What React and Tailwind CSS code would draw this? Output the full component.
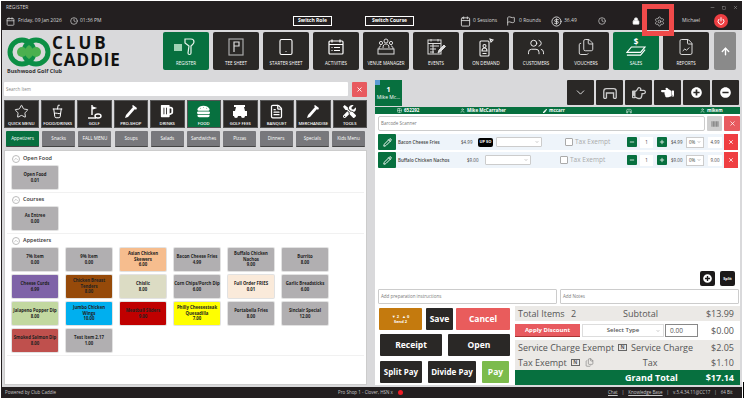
import {
  Calendar, Clock, Lock, Settings, Power, Minus, Square, X, Tablet, Users, FileChartLine,
  ArrowUp, ChevronDown, Plus, Pencil, Star, CupSoda, FileText, User, Barcode,
  ChevronUp, Flag, Grid2x2, CircleDollarSign, Files,
} from 'lucide-react'
import { FaRegHandPointRight, FaHandPointLeft, FaPlusCircle, FaMinusCircle, FaPen, FaBeer, FaHamburger, FaTools } from 'react-icons/fa'

const font = { fontFamily: '"Open Sans", sans-serif' }

function Scanner() {
  return (
    <svg width="24" height="18" viewBox="0 0 24 18" fill="none">
      <rect x="0" y="6" width="8" height="7" fill="#9fd4b5" />
      <path d="M11 1h6c2 0 3 1 3 3s-2 3-3 4l0 7c0 2-3 2-3 0l1-7-4-3z" stroke="#e8f3ec" strokeWidth="1.2" />
    </svg>
  )
}

function TeeSheet() {
  return (
    <svg width="16" height="18" viewBox="0 0 16 18" fill="none">
      <rect x="1" y="1" width="14" height="16" stroke="#aaa" strokeWidth="1.2" />
      <path d="M6 14V4h5v4H6" stroke="#ddd" strokeWidth="1.2" />
    </svg>
  )
}

function ActivitiesIcon() {
  return (
    <svg width="18" height="18" viewBox="0 0 18 18" fill="none" stroke="#fff" strokeWidth="1.2">
      <rect x="2" y="3" width="14" height="13" rx="1" />
      <path d="M2 6.5h14M5 1.5v3M13 1.5v3M7 9.5h6M7 12.5h6M4.5 9.5h1M4.5 12.5h1" />
    </svg>
  )
}

function VenueIcon() {
  return (
    <svg width="20" height="18" viewBox="0 0 20 18" fill="none" stroke="#ddd" strokeWidth="1">
      <circle cx="10" cy="3" r="2" />
      <circle cx="5" cy="5" r="1.6" />
      <circle cx="15" cy="5" r="1.6" />
      <path d="M7 10c0-3 1-4 3-4s3 1 3 4M3 11c0-2 .5-3 2-3M17 11c0-2-.5-3-2-3" />
      <rect x="2" y="11" width="16" height="5" />
    </svg>
  )
}

function EventsIcon() {
  return (
    <svg width="19" height="18" viewBox="0 0 19 18" fill="none" stroke="#ddd" strokeWidth="1">
      <rect x="1" y="2" width="13" height="14" />
      <path d="M1 5.5h13M4 1v2.5M11 1v2.5M3 8h9M3 11h6M3 14h4M6 5.5v10" />
      <path d="M11 15l1-3 5-5 1.5 1.5-5 5z" fill="#ddd" />
    </svg>
  )
}

function DemandIcon() {
  return (
    <svg width="16" height="19" viewBox="0 0 16 19" fill="none" stroke="#eee" strokeWidth="1.1">
      <rect x="2" y="3" width="9" height="15" rx="1" />
      <circle cx="6.5" cy="8" r="1.5" />
      <path d="M4 13c0-2 1-3 2.5-3S9 11 9 13zM4.500 15.500h4M12 1l3 1-2 2z" />
    </svg>
  )
}

function Money() {
  return (
    <div className="flex flex-col items-center">
      <span className="text-[8px] leading-[8px] font-bold text-white">$</span>
      <svg width="20" height="11" viewBox="0 0 22 12" fill="none">
        <path d="M1 7l5-6h15l-5 6zM1 10h15l5-6" stroke="#fff" strokeWidth="1.2" />
      </svg>
    </div>
  )
}

function Cart() {
  return (
    <svg width="16" height="15" viewBox="0 0 16 15" fill="#fff">
      <path d="M2 1h11v2h-1l1 4h2v5h-2a2 2 0 0 1-4 0H6a2 2 0 0 1-4 0H1V7h2l1-4H2z" />
    </svg>
  )
}

function GolfClub() {
  return (
    <svg width="15" height="16" viewBox="0 0 15 16" fill="none" stroke="#fff" strokeWidth="1.4">
      <path d="M5 1v10M5 3l3 1-3 1" />
      <ellipse cx="11" cy="12" rx="3" ry="2" />
      <path d="M1 14h8" />
    </svg>
  )
}

function Tube() {
  return (
    <svg width="14" height="15" viewBox="0 0 14 15" fill="#fff">
      <path d="M9 1l4 3-1 2-1-1-7 8-3 1 1-3 7-8-1-1z" />
    </svg>
  )
}

function Booth({ size = 16, color = '#ccc' }) {
  return (
    <svg width={size} height={size} viewBox="0 0 18 18" fill="none" stroke={color} strokeWidth="1.5">
      <path d="M2 15V7c0-2 1-3 3-3h8c2 0 3 1 3 3v8M5 15V9h8v6M2 15h3M13 15h3" />
    </svg>
  )
}

function Logo() {
  return (
    <svg width="44" height="30" viewBox="0 0 44 30" fill="none">
      <circle cx="15" cy="15" r="12" stroke="#0c8f45" strokeWidth="5" />
      <circle cx="29" cy="15" r="12" stroke="#0c8f45" strokeWidth="5" />
      <path d="M22 8c3 2 4 4 4 7s-1 5-4 7c-3-2-4-4-4-7s1-5 4-7z" fill="#4bb04f" />
      <circle cx="15" cy="15" r="5" fill="#4bb04f" />
      <circle cx="29" cy="15" r="5" fill="#4bb04f" />
    </svg>
  )
}

const navItems = [
  { label: 'REGISTER', icon: <Scanner />, active: true },
  { label: 'TEE SHEET', icon: <TeeSheet /> },
  { label: 'STARTER SHEET', icon: <Tablet size={18} strokeWidth={1.5} color="#fff" /> },
  { label: 'ACTIVITIES', icon: <ActivitiesIcon /> },
  { label: 'VENUE MANAGER', icon: <VenueIcon /> },
  { label: 'EVENTS', icon: <EventsIcon /> },
  { label: 'ON DEMAND', icon: <DemandIcon /> },
  { label: 'CUSTOMERS', icon: <Users size={18} strokeWidth={1.3} color="#eee" /> },
  { label: 'VOUCHERS', icon: <Files size={18} strokeWidth={1.3} color="#ddd" /> },
  { label: 'SALES', icon: <Money />, active: true },
  { label: 'REPORTS', icon: <FileChartLine size={18} strokeWidth={1.3} color="#ddd" /> },
]

const categories = [
  { label: 'QUICK MENU', icon: <Star size={15} strokeWidth={1.4} color="#fff" /> },
  { label: 'FOOD/DRINKS', icon: <CupSoda size={15} strokeWidth={1.6} color="#fff" /> },
  { label: 'GOLF', icon: <GolfClub /> },
  { label: 'PRO-SHOP', icon: <Tube /> },
  { label: 'DRINKS', icon: <FaBeer size={14} color="#fff" /> },
  { label: 'FOOD', icon: <FaHamburger size={13} color="#fff" />, active: true },
  { label: 'GOLF FEES', icon: <Cart /> },
  { label: 'BANQUET', icon: <FileText size={15} strokeWidth={2} color="#fff" /> },
  { label: 'MERCHANDISE', icon: <Tube /> },
  { label: 'TOOLS', icon: <FaTools size={13} color="#fff" /> },
]

const tabs = ['Appetizers', 'Snacks', 'FALL MENU', 'Soups', 'Salads', 'Sandwiches', 'Pizzas', 'Dinners', 'Specials', 'Kids Menu']

const appetizers = [
  { name: '7% Item', price: '0.00' },
  { name: '9% Item', price: '0.00' },
  { name: 'Asian Chicken Skewers', price: '6.00', bg: 'bg-[#f6bd8e]' },
  { name: 'Bacon Cheese Fries', price: '4.99' },
  { name: 'Buffalo Chicken Nachos', price: '9.00' },
  { name: 'Burrito', price: '8.00' },
  { name: 'Cheese Curds', price: '6.99', bg: 'bg-[#7f63a8]' },
  { name: 'Chicken Breast Tenders', price: '8.00', bg: 'bg-[#964a0a]' },
  { name: 'Chislic', price: '8.00', bg: 'bg-[#dcdcc4]' },
  { name: 'Corn Chips/Porch Dip', price: '6.00' },
  { name: 'Full Order FRIES', price: '0.01', bg: 'bg-[#faeada]' },
  { name: 'Garlic Breadsticks', price: '6.00' },
  { name: 'Jalapeno Popper Dip', price: '8.00', bg: 'bg-[#c2d8a0]' },
  { name: 'Jumbo Chicken Wings', price: '10.00', bg: 'bg-[#00afef]' },
  { name: 'Meatball Sliders', price: '9.00', bg: 'bg-[#c00000]' },
  { name: 'Philly Cheesesteak Quesadilla', price: '7.00', bg: 'bg-[#ffff00]' },
  { name: 'Portabella Fries', price: '8.00' },
  { name: 'Sinclair Special', price: '12.00' },
  { name: 'Smoked Salmon Dip', price: '8.00', bg: 'bg-[#bf504d]' },
  { name: 'Test Item 2.17', price: '1.00' },
]

function ItemCard({ name, price, bg = 'bg-[#b1afb1]' }) {
  return (
    <div className={`${bg} w-[46px] h-[23px] rounded-[1px] flex flex-col items-center justify-center text-center text-[4.3px] leading-[5.6px] font-bold text-[#222] shadow-[0_0_0_1px_#e2e2e2]`}>
      <span>{name}</span>
      <span>{price}</span>
    </div>
  )
}

function SectionHead({ title }) {
  return (
    <div className="h-[11px] flex items-center gap-[3px] pl-[5px] text-[5.5px] font-semibold text-[#333]">
      <span className="w-[8px] h-[8px] rounded-full border border-[#bbb] flex items-center justify-center">
        <ChevronUp size={6} color="#999" />
      </span>
      {title}
    </div>
  )
}

function Section({ title, children, pt = 'pt-[1px]' }) {
  return (
    <div className={`${pt} pb-[3px] mx-[2px] border-b border-[#f1f1f1]`}>
      <SectionHead title={title} />
      <div className="mt-[2px] pl-[5px] grid grid-cols-[repeat(6,46px)] gap-x-[8px] gap-y-[4px]">{children}</div>
    </div>
  )
}

function ToolButton({ children }) {
  return <div className="w-[27px] h-[25px] bg-[#2a2826] rounded-[1px] flex items-center justify-center text-white">{children}</div>
}

function Stepper({ children, green }) {
  return (
    <span className={`w-[10px] h-[10px] rounded-[1px] flex items-center justify-center ${green ? 'bg-[#07703f] text-white' : ''}`}>{children}</span>
  )
}

function OrderRow({ name, price, up, selectW, checkMl }) {
  return (
    <div className="h-[16px] flex items-center bg-[#eef4fa] ml-[3px] mr-[2px] text-[4.5px] text-[#444]">
      <span className="w-[18px] h-[16px] bg-[#07703f] rounded-[1px] flex items-center justify-center">
        <Pencil size={9} color="#fff" strokeWidth={2.5} />
      </span>
      <span className="ml-[2px] w-[58px] font-semibold whitespace-nowrap">{name}</span>
      <span className={up ? 'ml-[5px] w-[15px]' : 'ml-[11px] w-[15px]'}>{price}</span>
      {up && <span className="ml-[2px] w-[15px] h-[9px] bg-black text-white font-bold rounded-[2px] flex items-center justify-center whitespace-nowrap text-[4px]">UP SO</span>}
      <span className={`ml-[3px] ${selectW} h-[10px] bg-white border border-[#ccc] rounded-[1px] flex items-center justify-end pr-[2px]`}>
        <ChevronDown size={4} color="#555" />
      </span>
      <span className={`${checkMl} w-[8px] h-[8px] bg-white border border-[#aaa] rounded-[1px]`} />
      <span className="ml-[2px] text-[6.5px] text-[#aaa] whitespace-nowrap">Tax Exempt</span>
      <span className="ml-auto flex items-center">
        <Stepper green><Minus size={6} strokeWidth={3} /></Stepper>
        <span className="ml-[3px] w-[13px] h-[11px] bg-white flex items-center justify-center">1</span>
        <span className="ml-[4px]"><Stepper green><Plus size={6} strokeWidth={3} /></Stepper></span>
        <span className="ml-[4px] w-[15px]">{price}</span>
        <span className="w-[18px] h-[11px] bg-white border border-[#ccc] flex items-center justify-between px-[2px]">0%<ChevronDown size={4} /></span>
        <span className="ml-[4px] w-[14px] h-[11px] bg-white flex items-center justify-center">{price.slice(1)}</span>
        <span className="ml-[2px] w-[14px] h-[16px] bg-[#ef3e42] text-white flex items-center justify-center"><X size={6} strokeWidth={3} /></span>
      </span>
    </div>
  )
}

function NBox() {
  return <span className="w-[9px] h-[7px] shrink-0 border border-[#666] text-[5px] flex items-center justify-center font-bold text-[#555]">N</span>
}

function ActionButton({ w, bg = 'bg-[#2a2826]', text = 'text-[8.5px]', children }) {
  return <div className={`${w} ${bg} ${text} h-[22px] rounded-[1px] flex items-center justify-center font-bold text-white whitespace-nowrap`}>{children}</div>
}

export default function App() {
  return (
    <div className="w-[746px] h-[402px] bg-white pt-px pl-px overflow-hidden relative" style={font}>
      <div className="w-[741px] h-[397px] flex flex-col bg-[#d9d9db]">
        {/* Title bar */}
        <header className="h-[29px] bg-[#231f20] text-[#d8d8d8] text-[5px]">
          <div className="h-[13px] flex items-center pl-[5px] pr-[4px]">
            <span>REGISTER</span>
            <span className="ml-auto flex items-center gap-[7px] text-[#bbb]">
              <Minus size={5} /><Square size={4} /><X size={5} />
            </span>
          </div>
          <div className="h-[14px] flex items-center pl-[5px]">
            <Calendar size={9} />
            <span className="ml-[3px] w-[52px]">Friday, 09 Jan 2026</span>
            <Clock size={8} />
            <span className="ml-[2px] w-[213px]">01:36 PM</span>
            <span className="w-[39px] h-[10px] border border-white text-white font-bold flex items-center justify-center">Switch Role</span>
            <span className="ml-[33px] w-[49px] h-[10px] border border-white text-white font-bold flex items-center justify-center">Switch Course</span>
            <Calendar className="ml-[46px]" size={11} />
            <span className="ml-[2px] w-[33px]">0 Sessions</span>
            <Flag size={10} />
            <span className="ml-[3px] w-[32px]">0 Rounds</span>
            <CircleDollarSign size={11} />
            <span className="ml-[2px] w-[34px]">36.49</span>
            <Clock size={8} />
            <Lock className="ml-[26px]" size={8} fill="#fff" />
            <Settings className="ml-[14px]" size={11} strokeWidth={1.4} />
            <span className="ml-[17px] w-[32px]">Michael</span>
            <span className="w-[14px] h-[14px] rounded-full bg-[#ee3e42] flex items-center justify-center">
              <Power size={8} color="#fff" strokeWidth={3} />
            </span>
          </div>
        </header>

        {/* Logo and main nav */}
        <div className="h-[50px] border-l border-[#231f20] flex pt-[2px] pl-[5px]">
          <div className="w-[156px] shrink-0">
            <div className="flex items-start">
              <div className="mt-[5px]"><Logo /></div>
              <div className="mt-[2px] ml-[1px] text-[17px] leading-[17px] font-bold text-[#111] tracking-[1px]">
                <div className="tracking-[3px]">CLUB</div>
                <div>CADDIE</div>
              </div>
            </div>
            <div className="text-[5.5px] leading-[6px] font-bold text-[#333]">Bushwood Golf Club</div>
          </div>
          <div className="flex gap-[4px]">
            {navItems.map((item) => (
              <div
                key={item.label}
                className={`w-[46px] h-[38px] rounded-[2px] flex flex-col items-center pt-[5px] ${item.active ? 'bg-[#07703f]' : 'bg-[#2a2826]'}`}
              >
                <div className="h-[20px] flex items-center justify-center">{item.icon}</div>
                <span className="text-[4.5px] mt-[3px] text-white whitespace-nowrap">{item.label}</span>
              </div>
            ))}
          </div>
          <div className="ml-[5px] w-[22px] h-[38px] rounded-[2px] bg-[#8a8a8a] flex items-center justify-center">
            <ArrowUp size={11} color="#fff" strokeWidth={3} />
          </div>
        </div>

        {/* Body */}
        <div className="h-[307px] flex border-l border-[#231f20]">
          {/* Left column */}
          <div className="w-[363px] ml-[2px] shrink-0 pt-[2px]">
            <div className="flex gap-[4px]">
              <div className="flex-1 h-[14px] bg-white rounded-[1px] flex items-center pl-[2px] text-[4.5px] text-[#888]">Search Item</div>
              <div className="w-[15px] h-[15px] bg-[#e85a5f] rounded-[1px] flex items-center justify-center">
                <X size={7} color="#fff" strokeWidth={3} />
              </div>
            </div>
            <div className="mt-[3px] flex gap-[2px]">
              {categories.map((cat) => (
                <div
                  key={cat.label}
                  className={`flex-1 h-[28px] flex flex-col items-center pt-[3px] border border-[#555] ${cat.active ? 'bg-[#07703f]' : 'bg-[#2a2826]'}`}
                >
                  <div className="h-[15px] flex items-center">{cat.icon}</div>
                  <span className="text-[4.2px] text-white font-semibold mt-[2px] whitespace-nowrap">{cat.label}</span>
                </div>
              ))}
            </div>
            <div className="mt-[3px] px-[2px] flex justify-between">
              {tabs.map((tab, i) => (
                <div
                  key={tab}
                  className={`w-[33px] h-[16px] rounded-[1px] flex items-center justify-center text-[4.6px] text-white whitespace-nowrap border-b border-[#444] ${i === 0 ? 'bg-[#07703f]' : 'bg-[#78787c]'}`}
                >
                  {tab}
                </div>
              ))}
            </div>
            <div className="mt-[3px] h-[235px] bg-white border border-[#ccc]">
              <Section title="Open Food" pt="pt-[2px]">
                <ItemCard name="Open Food" price="0.01" />
              </Section>
              <Section title="Courses">
                <ItemCard name="As Entree" price="0.00" />
              </Section>
              <Section title="Appetizers">
                {appetizers.map((item) => (
                  <ItemCard key={item.name} {...item} />
                ))}
              </Section>
            </div>
          </div>

          {/* Right column */}
          <div className="w-[365px] ml-[8px] shrink-0 flex flex-col">
            <div className="h-[26px] flex">
              <div className="w-[27px] h-[26px] bg-[#07703f] relative flex flex-col items-center justify-center text-white">
                <span className="absolute top-0 left-0 w-[5px] h-[5px] bg-[#5b9bd5]" />
                <span className="text-[7px] leading-[9px] font-bold">1</span>
                <span className="text-[5px] leading-[7px]">Mike Mc...</span>
              </div>
              <div className="ml-auto flex gap-[2px] pr-px">
                <ToolButton><ChevronDown size={13} strokeWidth={1.5} /></ToolButton>
                <ToolButton><Booth /></ToolButton>
                <ToolButton><FaRegHandPointRight size={14} color="#ccc" /></ToolButton>
                <ToolButton><FaHandPointLeft size={13} /></ToolButton>
                <ToolButton><FaPlusCircle size={11} /></ToolButton>
                <ToolButton><FaMinusCircle size={11} /></ToolButton>
              </div>
            </div>
            <div className="mt-[1px] h-[7px] bg-[#07703f] text-white font-bold text-[4.5px] flex items-center relative">
              <span className="flex items-center gap-[2px] ml-[22px] w-[63px]"><Grid2x2 size={5} />652292</span>
              <span className="flex items-center gap-[2px] w-[83px]"><User size={5} />Mike McCarraher</span>
              <span className="flex items-center gap-[2px] w-[83px]"><FaPen size={4} />mccarr</span>
              <span className="w-[74px]"><Booth size={6} color="#fff" /></span>
              <span className="flex items-center gap-[2px]"><User size={5} />mikem</span>
            </div>

            <div className="h-[271px] bg-white flex flex-col">
              <div className="mt-[2px] h-[15px] flex">
                <div className="ml-[3px] w-[327px] bg-white border border-[#ccc] rounded-[2px] flex items-center pl-[2px] text-[4.5px] text-[#777]">Barcode Scanner</div>
                <div className="ml-[2px] w-[15px] bg-[#cfcfcf] rounded-[1px] flex items-center justify-center"><Barcode size={8} color="#555" /></div>
                <div className="ml-[2px] w-[16px] bg-[#e85a5f] rounded-[1px] flex items-center justify-center"><X size={7} color="#fff" strokeWidth={2.5} /></div>
              </div>
              <div className="mt-[3px] flex flex-col gap-[2px]">
                <OrderRow name="Bacon Cheese Fries" price="$4.99" up selectW="w-[46px]" checkMl="ml-[23px]" />
                <OrderRow name="Buffalo Chicken Nachos" price="$9.00" selectW="w-[46px]" checkMl="ml-[29px]" />
              </div>
              <div className="flex-1" />
              <div className="flex justify-end gap-[5px] pr-[5px]">
                <span className="w-[15px] h-[15px] bg-[#1c1a1a] rounded-[2px] flex items-center justify-center"><FaPlusCircle size={9} color="#fff" /></span>
                <span className="w-[15px] h-[15px] bg-[#1c1a1a] rounded-[2px] flex items-center justify-center text-white font-bold text-[3.8px]">Split</span>
              </div>
              <div className="mt-[3px] flex gap-[3px] px-[3px] pr-[1px]">
                <div className="w-[179px] h-[15px] border border-[#ccc] rounded-[1px] flex items-center pl-[2px] text-[4.5px] text-[#777]">Add preparation instructions</div>
                <div className="flex-1 h-[15px] border border-[#ccc] rounded-[1px] flex items-center pl-[2px] text-[4.5px] text-[#777]">Add Notes</div>
              </div>

              {/* Totals */}
              <div className="mt-[2px] h-[79px] flex">
                <div className="w-[140px] shrink-0 pt-[2px] pl-[5px] flex flex-col">
                  <div className="flex gap-[3px] -ml-px">
                    <div className="w-[43px] h-[22px] bg-[#c47a0e] rounded-[1px] flex flex-col items-center justify-center text-white text-[4px] font-bold leading-[5px]">
                      <span>▼ 2 &nbsp; ▲ 0</span>
                      <span>Send 2</span>
                    </div>
                    <ActionButton w="w-[27px] ml-[1px]">Save</ActionButton>
                    <ActionButton w="w-[54px]" bg="bg-[#e95c5c]">Cancel</ActionButton>
                  </div>
                  <div className="mt-[4px] flex gap-[6px]">
                    <ActionButton w="w-[62px]">Receipt</ActionButton>
                    <ActionButton w="w-[62px]">Open</ActionButton>
                  </div>
                  <div className="mt-[5px] flex gap-[6px]">
                    <ActionButton w="w-[42px]" text="text-[8px]">Split Pay</ActionButton>
                    <ActionButton w="w-[48px]" text="text-[8px]">Divide Pay</ActionButton>
                    <ActionButton w="w-[27px]" bg="bg-[#7cbb4c]">Pay</ActionButton>
                  </div>
                </div>
                <div className="flex-1 text-[9px] text-[#555] flex flex-col">
                  <div className="h-[15px] bg-[#ebe9e6] flex items-center pl-[3px] pr-[6px]">
                    <span className="w-[53px] whitespace-nowrap">Total Items</span>
                    <span className="w-[52px]">2</span>
                    <span>Subtotal</span>
                    <span className="ml-auto">$13.99</span>
                  </div>
                  <div className="h-[19px] flex items-center pr-[6px]">
                    <span className="w-[65px] h-[13px] bg-[#e85a5f] text-white font-bold text-[6px] flex items-center justify-center border-b border-[#a33]">Apply Discount</span>
                    <span className="ml-[2px] w-[82px] h-[13px] bg-white border border-[#ddd] text-[6px] font-semibold flex items-center justify-center relative">
                      Select Type
                      <ChevronDown className="absolute right-[3px]" size={4} />
                    </span>
                    <span className="ml-px w-[33px] h-[13px] border border-[#888] text-[6.5px] flex items-center pl-[4px]">0.00</span>
                    <span className="ml-auto">$0.00</span>
                  </div>
                  <div className="h-[15px] bg-[#ebe9e6] flex items-center pl-[3px] pr-[6px]">
                    <span className="whitespace-nowrap">Service Charge Exempt</span>
                    <span className="ml-[4px]"><NBox /></span>
                    <span className="ml-[4px] whitespace-nowrap">Service Charge</span>
                    <span className="ml-auto">$2.05</span>
                  </div>
                  <div className="h-[15px] bg-[#ebe9e6] flex items-center pl-[3px] pr-[6px]">
                    <span className="whitespace-nowrap">Tax Exempt</span>
                    <span className="ml-[4px]"><NBox /></span>
                    <Files className="ml-[5px]" size={9} strokeWidth={1.2} />
                    <span className="ml-[49px]">Tax</span>
                    <span className="ml-auto">$1.10</span>
                  </div>
                  <div className="h-[15px] bg-[#07703f] text-white font-bold flex items-center pr-[6px]">
                    <span className="ml-[110px]">Grand Total</span>
                    <span className="ml-auto">$17.14</span>
                  </div>
                </div>
              </div>
            </div>
          </div>
        </div>

        {/* Status bar */}
        <footer className="h-[11px] bg-[#231f20] text-[#c8c8c8] text-[4.5px] flex items-center pl-[4px]">
          <span className="w-[333px]">Powered by Club Caddie</span>
          <span className="w-[60px] whitespace-nowrap">Pro Shop 1 - Clover, HSN x</span>
          <span className="w-[5px] h-[5px] rounded-full bg-[#ee1c25]" />
          <span className="ml-[205px] underline">Chat</span>
          <span className="mx-[4px]">|</span>
          <span className="underline">Knowledge Base</span>
          <span className="mx-[4px]">|</span>
          <span>v.5.4.34.11@CC17</span>
          <span className="mx-[4px]">|</span>
          <span>64 Bit</span>
        </footer>
      </div>

      {/* Red highlight box over the settings icon */}
      <div className="absolute left-[642px] top-[4px] w-[32px] h-[32px] border-[5px] border-[#f04a4a]" />
      <div className="absolute left-[743px] top-[382px] w-px h-[16px] bg-black" />
    </div>
  )
}
